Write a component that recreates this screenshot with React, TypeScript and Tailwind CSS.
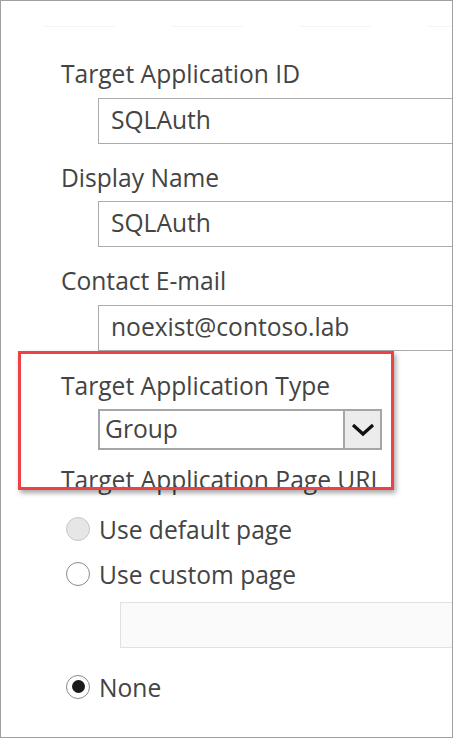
const font = "font-['Open_Sans','Noto_Sans',sans-serif]";

function Label({ text, className = "" }: { text: string; className?: string }) {
  return (
    <div className={`h-8 pl-[60px] text-[24.6px] leading-8 text-[#444] whitespace-nowrap ${className}`}>
      {text}
    </div>
  );
}

function TextBox({ value, className = "" }: { value: string; className?: string }) {
  return (
    <div
      className={`ml-[97px] h-[46px] border border-r-0 border-[#ababab] bg-white pl-[12px] text-[24.6px] leading-[42px] text-[#444] whitespace-nowrap ${className}`}
    >
      {value}
    </div>
  );
}

function Radio({ label, state }: { label: string; state: "disabled" | "off" | "on" }) {
  return (
    <div className="flex h-8 items-center pl-[65px] text-[24.6px] leading-8 text-[#444] whitespace-nowrap">
      <span
        className={`mr-[9px] -mt-[3px] flex h-6 w-6 items-center justify-center rounded-full border ${
          state === "disabled" ? "border-[#c6c6c6] bg-[#e6e6e6]" : "border-[#8a8a8a] bg-white"
        }`}
      >
        {state === "on" && <span className="h-[13px] w-[13px] rounded-full bg-[#1a1a1a]" />}
      </span>
      {label}
    </div>
  );
}

export default function App() {
  return (
    <div className={`relative h-[738px] w-[453px] overflow-hidden border border-[#a0a0a0] bg-white ${font}`}>
      {/* faint dashed rule at the top */}
      <div className="ml-[42px] mt-[25px] h-[1px] bg-[repeating-linear-gradient(90deg,#f5f5f5_0px,#f5f5f5_72px,transparent_72px,transparent_128px)]" />

      <Label text="Target Application ID" className="mt-[31px]" />
      <TextBox value="SQLAuth" className="mt-[8px]" />

      <Label text="Display Name" className="mt-[18px]" />
      <TextBox value="SQLAuth" className="mt-[7px]" />

      <Label text="Contact E-mail" className="mt-[18px]" />
      <TextBox value="noexist@contoso.lab" className="mt-[8px]" />

      <Label text="Target Application Type" className="mt-[19px]" />
      <div className="ml-[97px] mt-[7px] flex h-[41px] w-[284px] border-2 border-[#a6a6a6] bg-white">
        <div className="flex-1 pl-[5px] text-[24.6px] leading-[36px] text-[#444]">Group</div>
        <div className="flex w-[37px] items-center justify-center border-l-2 border-[#a6a6a6] bg-[#ececec]">
          <svg width="24" height="14" viewBox="0 0 24 14">
            <path d="M2 2 L12 11 L22 2" fill="none" stroke="#111" strokeWidth="3.2" />
          </svg>
        </div>
      </div>

      <Label text="Target Application Page URL" className="mt-[14px]" />

      <div className="mt-[18px]">
        <Radio label="Use default page" state="disabled" />
      </div>
      <div className="mt-[13px]">
        <Radio label="Use custom page" state="off" />
      </div>
      <div className="ml-[119px] mt-[11px] h-[46px] border border-r-0 border-[#e1e1e1] bg-[#fafafa]" />
      <div className="mt-[24px]">
        <Radio label="None" state="on" />
      </div>

      {/* red highlight annotation */}
      <div className="pointer-events-none absolute left-[17px] top-[350px] h-[139px] w-[376px] border-[3px] border-[#ee4146] shadow-[2px_3px_5px_rgba(0,0,0,0.35)]" />
    </div>
  );
}
